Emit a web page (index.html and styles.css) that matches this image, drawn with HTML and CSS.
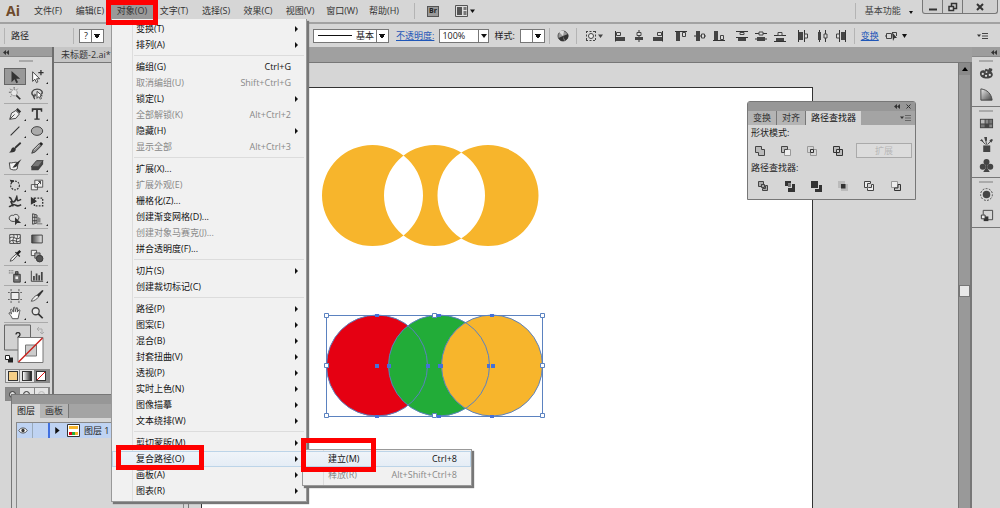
FILE: index.html
```html
<!DOCTYPE html>
<html lang="zh-CN">
<head>
<meta charset="utf-8">
<title>未标题-2.ai</title>
<link rel="stylesheet" href="styles.css">
</head>
<body>
<svg class="sprite" aria-hidden="true">
  <symbol id="al-left" viewBox="0 0 12 12"><path d="M1.5 1v10.500" stroke="#333"/><path d="M2.500 2.500h4v3h-4z" fill="#ddd" stroke="#444"/><path d="M2 7h9v4H2z" fill="#444"/></symbol>
  <symbol id="al-hc" viewBox="0 0 12 12"><path d="M6 0v12" stroke="#333"/><path d="M4 2.500h4v3H4z" fill="#ddd" stroke="#444"/><path d="M2 7h8v3H2z" fill="#444"/></symbol>
  <symbol id="al-vc" viewBox="0 0 12 12"><path d="M0 6h12" stroke="#333"/><path d="M7.500 4h3v4h-3z" fill="#ddd" stroke="#444"/><path d="M2 1h4v10H2z" fill="#444"/></symbol>
  <symbol id="al-top" viewBox="0 0 12 12"><path d="M0 1.500h12" stroke="#333"/><path d="M7.500 2.500h3v4h-3z" fill="#ddd" stroke="#444"/><path d="M1 2h4v9H1z" fill="#444"/></symbol>
  <symbol id="di-v" viewBox="0 0 12 12"><path d="M0 1.500h12M0 7.500h12" stroke="#333"/><path d="M4 2.500h4v2H4z" fill="#ddd" stroke="#444"/><path d="M2 8h8v3H2z" fill="#444"/></symbol>
  <symbol id="di-vc" viewBox="0 0 12 12"><path d="M0 3.500h12M0 9h12" stroke="#333"/><path d="M4 2h4v3H4z" fill="#ddd" stroke="#444"/><path d="M2 7h8v4H2z" fill="#444"/></symbol>
  <symbol id="di-vb" viewBox="0 0 12 12"><path d="M0 5.500h12M0 11.500h12" stroke="#333"/><path d="M4 2.500h4v3H4z" fill="#ddd" stroke="#444"/><path d="M2 8h8v3H2z" fill="#444"/></symbol>
  <symbol id="di-h" viewBox="0 0 12 12"><path d="M1.500 0v12M7.500 0v12" stroke="#333"/><path d="M7.500 4h3v4h-3z" fill="#ddd" stroke="#444"/><path d="M2 2h4v8H2z" fill="#444"/></symbol>
  <symbol id="di-hc" viewBox="0 0 12 12"><path d="M3.500 0v12M9.500 0v12" stroke="#333"/><path d="M8 4h3v4H8z" fill="#ddd" stroke="#444"/><path d="M2 2h3v8H2z" fill="#444"/></symbol>
</svg>

<header class="menubar">
  <span class="logo">Ai</span>
  <nav class="menus" aria-label="主菜单">
    <button class="top">文件(F)</button>
    <button class="top">编辑(E)</button>
    <div class="menu-wrap">
      <button class="top open">对象(O)</button>
      <div class="menu" role="menu">
        <button class="mi sub">变换(T)</button>
        <button class="mi sub">排列(A)</button>
        <hr>
        <button class="mi">编组(G)<kbd>Ctrl+G</kbd></button>
        <button class="mi" disabled>取消编组(U)<kbd>Shift+Ctrl+G</kbd></button>
        <button class="mi sub">锁定(L)</button>
        <button class="mi" disabled>全部解锁(K)<kbd>Alt+Ctrl+2</kbd></button>
        <button class="mi sub">隐藏(H)</button>
        <button class="mi" disabled>显示全部<kbd>Alt+Ctrl+3</kbd></button>
        <hr>
        <button class="mi">扩展(X)...</button>
        <button class="mi" disabled>扩展外观(E)</button>
        <button class="mi">栅格化(Z)...</button>
        <button class="mi">创建渐变网格(D)...</button>
        <button class="mi" disabled>创建对象马赛克(J)...</button>
        <button class="mi">拼合透明度(F)...</button>
        <hr>
        <button class="mi sub">切片(S)</button>
        <button class="mi">创建裁切标记(C)</button>
        <hr>
        <button class="mi sub">路径(P)</button>
        <button class="mi sub">图案(E)</button>
        <button class="mi sub">混合(B)</button>
        <button class="mi sub">封套扭曲(V)</button>
        <button class="mi sub">透视(P)</button>
        <button class="mi sub">实时上色(N)</button>
        <button class="mi sub">图像描摹</button>
        <button class="mi sub">文本绕排(W)</button>
        <hr>
        <button class="mi sub">剪切蒙版(M)</button>
        <div class="sub-wrap">
          <button class="mi sub hot">复合路径(O)</button>
          <div class="menu submenu" role="menu">
            <button class="mi hot">建立(M)<kbd>Ctrl+8</kbd></button>
            <button class="mi" disabled>释放(R)<kbd>Alt+Shift+Ctrl+8</kbd></button>
            <span class="mark mark-make"></span>
          </div>
          <span class="mark mark-compound"></span>
        </div>
        <button class="mi sub">画板(A)</button>
        <button class="mi sub">图表(R)</button>
      </div>
      <span class="mark mark-object"></span>
    </div>
    <button class="top">文字(T)</button>
    <button class="top">选择(S)</button>
    <button class="top">效果(C)</button>
    <button class="top">视图(V)</button>
    <button class="top">窗口(W)</button>
    <button class="top">帮助(H)</button>
  </nav>
  <span class="vsep"></span>
  <button class="bridge" aria-label="Bridge">Br</button>
  <button class="arrange" aria-label="排列文档">
    <svg width="22" height="12" viewBox="0 0 22 12"><path d="M.5.500h12v11H.5z" fill="#ddd" stroke="#555"/><path d="M2 2h5v8H2z" fill="#555"/><path d="M8.500 2h3v3h-3zM8.500 6h3v4h-3z" fill="#777"/><path d="M15 4.500h5l-2.500 3.500z" fill="#111"/></svg>
  </button>
  <span class="grow"></span>
  <span class="vsep tall"></span>
  <button class="workspace-pick">基本功能 <i class="caret small"></i></button>
  <div class="winbtns">
    <button aria-label="最小化"><svg width="10" height="10" viewBox="0 0 10 10"><path d="M1 7.500h8" stroke="#333" stroke-width="2"/></svg></button>
    <button aria-label="还原"><svg width="10" height="10" viewBox="0 0 10 10"><path d="M3.500 1.500h5v5h-5z" fill="none" stroke="#333" stroke-width="1.500"/><path d="M1 4.500h4.500v4H1z" fill="#ddd" stroke="#333" stroke-width="1.500"/></svg></button>
    <button class="close" aria-label="关闭"><svg width="10" height="10" viewBox="0 0 10 10"><path d="M2 2l6 6M8 2l-6 6" stroke="#333" stroke-width="2"/></svg></button>
  </div>
</header>

<section class="controls" aria-label="控制">
  <span class="vsep"></span>
  <span class="kind">路径</span>
  <span class="vsep"></span>
  <select class="box fillbox" aria-label="填色"><option>?</option></select>
  <div class="stroke-set">
    <label class="brush"><span class="line"></span><select class="box" aria-label="画笔定义"><option>基本</option></select></label>
    <a href="#opacity">不透明度:</a>
    <span class="combo"><input id="opacity" aria-label="不透明度" value="100%"><button aria-label="选择不透明度"><i class="caret"></i></button></span>
    <label for="gstyle">样式:</label>
    <select id="gstyle" class="box gstyle"><option></option></select>
  </div>
  <span class="vsep"></span>
  <button class="ic" aria-label="重新着色"><svg width="12" height="12" viewBox="0 0 12 12"><circle cx="6" cy="6" r="5" fill="#999" stroke="#555"/><path d="M6 6L2 2a5 5 0 0 1 5-1z" fill="#ddd"/><path d="M6 6L11 4a5 5 0 0 1-3 6.500zM6 6l-4.500 2A5 5 0 0 0 7 11z" fill="#333"/></svg></button>
  <span class="vsep"></span>
  <button class="ic wide" aria-label="对齐"><svg width="18" height="12" viewBox="0 0 18 12"><path d="M1 1.500h10M1 10.500h10M1.500 1v10M10.500 1v10" stroke="#444" stroke-dasharray="2 1.500"/><circle cx="6" cy="6" r="2.500" fill="#eee" stroke="#444"/><path d="M13 4.500h5L15.500 8z" fill="#444"/></svg></button>
  <div class="icset">
    <button class="ic" aria-label="左对齐"><svg><use href="#al-left"/></svg></button>
    <button class="ic" aria-label="水平居中"><svg><use href="#al-hc"/></svg></button>
    <button class="ic" aria-label="右对齐"><svg class="flipx"><use href="#al-left"/></svg></button>
  </div>
  <div class="icset">
    <button class="ic" aria-label="顶对齐"><svg><use href="#al-top"/></svg></button>
    <button class="ic" aria-label="垂直居中"><svg><use href="#al-vc"/></svg></button>
    <button class="ic" aria-label="底对齐"><svg class="flipy"><use href="#al-top"/></svg></button>
  </div>
  <div class="icset">
    <button class="ic" aria-label="按顶分布"><svg><use href="#di-v"/></svg></button>
    <button class="ic" aria-label="垂直分布"><svg><use href="#di-vc"/></svg></button>
    <button class="ic" aria-label="按底分布"><svg><use href="#di-vb"/></svg></button>
  </div>
  <div class="icset">
    <button class="ic" aria-label="按左分布"><svg><use href="#di-h"/></svg></button>
    <button class="ic" aria-label="水平分布"><svg><use href="#di-hc"/></svg></button>
    <button class="ic" aria-label="按右分布"><svg class="flipx"><use href="#di-h"/></svg></button>
  </div>
  <span class="vsep"></span>
  <a href="#transform">变换</a>
  <button class="ic iso" aria-label="隔离"><svg width="24" height="12" viewBox="0 0 24 12"><path d="M1.500 3.500h5v5h-5zM0 6h2" fill="none" stroke="#444"/><path d="M7 2.500h4.500V6" fill="none" stroke="#444"/><path d="M7 2l5 6H9.500L8 11z" fill="#333"/><path d="M17 4h5l-2.500 4z" fill="#111"/></svg></button>
  <span class="grow"></span>
  <button class="ic flymenu" aria-label="面板菜单"><svg width="12" height="10" viewBox="0 0 12 10"><path d="M0 3.500h4L2 6z" fill="#333"/><path d="M5 2.500h6M5 5h6M5 7.500h6" stroke="#444"/></svg></button>
</section>

<main class="stage">
  <aside class="tools" aria-label="工具">
    <div class="cap"><svg width="6" height="5" viewBox="0 0 6 5"><path d="M3 0v5L0 2.500zM6 0v5L3 2.500z" fill="#333"/></svg></div>
    <span class="grip"></span>
    <div class="tgroup">
      <button class="on" aria-label="选择"><svg viewBox="0 0 16 16"><path d="M4 1v13l3.500-3.500 2 4.500 2-1-2-4H14z" fill="#333"/></svg></button>
      <button class="more" aria-label="直接选择"><svg viewBox="0 0 16 16"><path d="M3 2v11l2.500-2.500 2 4 1.500-1L7.500 10H11z" fill="#fff" stroke="#333"/><path d="M12.500 0v6M9.500 3h6" stroke="#333" stroke-width="1.500"/></svg></button>
      <button aria-label="魔棒"><svg viewBox="0 0 16 16"><circle cx="7" cy="6.500" r="3.500" fill="#e8e8e8" stroke="#555" stroke-dasharray="1 1"/><path d="M7 0v2M1 6h2M2.500 2l1.500 1.500M11 2l-1 1M3 11l1-1" stroke="#555"/><path d="M9.500 9.500l4.500 4.500" stroke="#333" stroke-width="2"/></svg></button>
      <button aria-label="套索"><svg viewBox="0 0 16 16"><path d="M4 10C0 7 3 2.500 8 2.500s7.500 3 5 6M4 10c-1 2 2 2 1 4M4 10c2 1 3-1 1-2" fill="none" stroke="#444" stroke-width="1.500"/><path d="M8 5v8l2-2 2 3 1-1-1.500-3H14z" fill="#fff" stroke="#333"/></svg></button>
    </div>
    <div class="tgroup">
      <button class="more" aria-label="钢笔"><svg viewBox="0 0 16 16"><path d="M2 14l2-7 5-3 4 4-4 5zM2 14l5.500-5.500" fill="#eee" stroke="#333"/><path d="M9 3l2-2 4 4-2 2z" fill="#333"/></svg></button>
      <button class="more" aria-label="文字"><svg viewBox="0 0 16 16"><path d="M2 1.500h12v4h-1.500L12 3.500H9V13h2v1.500H5V13h2V3.500H4l-.5 2H2z" fill="#333"/></svg></button>
      <button class="more" aria-label="直线段"><svg viewBox="0 0 16 16"><path d="M3 13L13 3" stroke="#333" stroke-width="1.300"/></svg></button>
      <button class="more" aria-label="椭圆"><svg viewBox="0 0 16 16"><ellipse cx="8" cy="8" rx="6.500" ry="5" fill="#aaa" stroke="#333"/></svg></button>
      <button aria-label="画笔"><svg viewBox="0 0 16 16"><path d="M14.500 2L8 8" stroke="#333" stroke-width="2"/><path d="M9 8.500c0 4-3 5-8 4.500 3-1 2-5 5-6z" fill="#333"/></svg></button>
      <button class="more" aria-label="铅笔"><svg viewBox="0 0 16 16"><path d="M2 14l1.500-4 7-7 2.500 2.500-7 7z" fill="#888" stroke="#333"/><path d="M10.500 3l2-2 2.500 2.500-2 2z" fill="#222"/><path d="M5 10l6-6" stroke="#ddd"/></svg></button>
      <button aria-label="斑点画笔"><svg viewBox="0 0 16 16"><path d="M1.500 5.500c3 1 7-2 10 0l-1 7c-2 2-6 1-8 0z" fill="#f4f4f4" stroke="#333"/><path d="M15.500 1L9 6l-4 5c3 0 5-1 6-3z" fill="#333"/></svg></button>
      <button class="more" aria-label="橡皮擦"><svg viewBox="0 0 16 16"><path d="M1.500 10l6-7h7.500L9.500 10z" fill="#777" stroke="#333"/><path d="M1.500 10h8v4h-8zM9.500 10L15 3v4l-5.500 7z" fill="#444"/></svg></button>
    </div>
    <div class="tgroup">
      <button class="more" aria-label="旋转"><svg viewBox="0 0 16 16"><circle cx="8" cy="8.500" r="5" fill="none" stroke="#333" stroke-width="1.300" stroke-dasharray="2 1.300"/><path d="M2 2l5 .5-3 4z" fill="#333"/></svg></button>
      <button class="more" aria-label="比例缩放"><svg viewBox="0 0 16 16"><path d="M5.500 2.500h9v8h-9zM1.500 7.500h7v6h-7z" fill="#eee" stroke="#444"/><path d="M8 8l4-4M9.500 4H12v3" fill="none" stroke="#333"/></svg></button>
      <button class="more" aria-label="宽度"><svg viewBox="0 0 16 16"><path d="M1 3c4-1 2 5 5 5s3-4 4-6c1 4-1 6 5 3M1 13c3 1 3-3 6-2s4 3 8 0M3 7l3 6" fill="none" stroke="#333" stroke-width="1.800"/></svg></button>
      <button aria-label="自由变换"><svg viewBox="0 0 16 16"><path d="M5 3.500h9.500v9H5z" fill="none" stroke="#333" stroke-width="1.500" stroke-dasharray="2 1.500"/><path d="M1 2v9l7-4z" fill="#333"/></svg></button>
      <button class="more" aria-label="形状生成器"><svg viewBox="0 0 16 16"><path d="M2 9c-2-4 2-6 4-5 3-3 8 0 6 4-1 3-8 4-10 1z" fill="#ddd" stroke="#333"/><path d="M8 6v9l2.500-2.500H15z" fill="#333"/></svg></button>
      <button class="more" aria-label="透视网格"><svg viewBox="0 0 16 16"><path d="M3 2l5 1.500v9L3 14zM3 6h5M3 10h5M5.500 3v10" fill="#ddd" stroke="#333"/><path d="M8 5l4 2v5H8z" fill="#888"/><path d="M8 13.500h6" stroke="#666"/></svg></button>
    </div>
    <div class="tgroup">
      <button aria-label="网格"><svg viewBox="0 0 16 16"><path d="M2 3h12v10H2z" fill="#eee" stroke="#333"/><path d="M2 7c4-4 8 4 12-1M2 11c4-4 8 2 12-1M6 3c3 3-3 6 1 10M10 3c3 3-3 6 1 10" fill="none" stroke="#333"/></svg></button>
      <button aria-label="渐变"><svg viewBox="0 0 16 16"><defs><linearGradient id="g1"><stop stop-color="#444"/><stop offset="1" stop-color="#eee"/></linearGradient></defs><path d="M2 3.500h12v9H2z" fill="url(#g1)" stroke="#333"/></svg></button>
      <button class="more" aria-label="吸管"><svg viewBox="0 0 16 16"><path d="M2.500 14l1-3 5.500-5 1.500 1.500-5 5.500z" fill="#eee" stroke="#444"/><path d="M8 4l5 5 1-1-2-2 3-3-2-2-3 3-1-1z" fill="#222"/></svg></button>
      <button aria-label="混合"><svg viewBox="0 0 16 16"><path d="M1.500 1.500h6v6h-6z" fill="#eee" stroke="#444"/><path d="M5.500 4.500h6v6h-6z" fill="#aaa" stroke="#444"/><circle cx="11" cy="11" r="3.800" fill="#555" stroke="#333"/></svg></button>
    </div>
    <div class="tgroup">
      <button class="more" aria-label="符号喷枪"><svg viewBox="0 0 16 16"><path d="M6.500 6H14v9H6.500zM8.500 3h3v3h-3z" fill="#777" stroke="#333"/><path d="M8.500 8.500h3v3h-3z" fill="#eee"/><path d="M1 2h6M1 4.500h6" stroke="#444" stroke-dasharray="1 1"/></svg></button>
      <button class="more" aria-label="柱形图"><svg viewBox="0 0 16 16"><path d="M1.500 2v12H15" fill="none" stroke="#333"/><path d="M3.500 8h2v5h-2zM6.500 5h2v8h-2zM9.500 7h2v6h-2zM12.500 3.500h2V13h-2z" fill="#444"/></svg></button>
    </div>
    <div class="tgroup">
      <button aria-label="画板"><svg viewBox="0 0 16 16"><path d="M3.500 4h9v8h-9z" fill="#eee" stroke="#333"/><path d="M3.500 0v2.500M12.500 0v2.500M3.500 13.500V16M12.500 13.500V16M0 4h2M0 12h2M14 4h2M14 12h2" stroke="#555"/></svg></button>
      <button class="more" aria-label="切片"><svg viewBox="0 0 16 16"><path d="M1.500 14c1-3 4-6 6.500-7l2 2c-2 2-5 5-8.500 5z" fill="#eee" stroke="#444"/><path d="M8 6.500l6-5.500 1.500 1L10 9z" fill="#333"/></svg></button>
      <button class="more" aria-label="抓手"><svg viewBox="0 0 16 16"><path d="M5 14.500C4 11.500 2 10 1 8c1-1 2 0 3 1L3 4c1-1 2 0 3 3l.5-5.500c1-1 1.500 0 1.800 5l1.500-4.500c1-.5 1.700 0 .7 5l2-2.500c1-.5 1.500 0 .5 3l-1.500 7z" fill="#fff" stroke="#444"/></svg></button>
      <button aria-label="缩放"><svg viewBox="0 0 16 16"><circle cx="6.500" cy="6" r="4" fill="#e6e6e6" stroke="#444" stroke-width="1.500"/><path d="M9.500 9l5 5" stroke="#333" stroke-width="2"/></svg></button>
    </div>
    <svg class="fillstroke" viewBox="0 0 46 42" role="img" aria-label="填色和描边">
      <path d="M.5 1h26v25H.5z" fill="#d2d2d2" stroke="#666"/>
      <path d="M12 10.500c0-2.500 4-2.500 4 0 0 2-2 1.500-2 3.500" fill="none" stroke="#222" stroke-width="1.200"/>
      <path d="M14 13.500h25v25H14z" fill="#fff" stroke="#777"/>
      <path d="M21.500 21h11v11h-11z" fill="#ccc" stroke="#777"/>
      <path d="M14.500 38L38.500 14" stroke="#c8201c" stroke-width="1.500"/>
      <path d="M33 5h5v4M35 3l-2 2 2 2M36 8l2 2 2-2" fill="none" stroke="#aaa"/>
      <path d="M4 33.500h5v5H4z" fill="#222"/><path d="M1.500 31.500h4v4h-4z" fill="#fff" stroke="#222"/>
    </svg>
    <div class="paintmode">
      <button aria-label="颜色"><i class="p-color"></i></button><button aria-label="渐变色"><i class="p-grad"></i></button><button class="on" aria-label="无"><i class="p-none"></i></button>
    </div>
    <div class="paintmode modes">
      <button class="on" aria-label="正常绘图"><i class="dot"></i></button><button aria-label="背面绘图"><i class="dot"></i></button><button aria-label="内部绘图"><i class="dot dim"></i></button>
    </div>
  </aside>

  <section class="doc">
    <div class="tabs"><span class="tab">未标题-2.ai*</span></div>
    <div class="view">
      <div class="canvas">
        <div class="artboard">
          <svg class="art" width="230" height="280" viewBox="320 140 230 280" role="img" aria-label="圆形">
            <path fill="#f7b52c" fill-rule="evenodd" d="M322 195.500a50.500 50.500 0 1 0 101 0a50.500 50.500 0 1 0-101 0zM384 195.500a50.500 50.500 0 1 0 101 0a50.500 50.500 0 1 0-101 0zM437.500 195.500a50.500 50.500 0 1 0 101 0a50.500 50.500 0 1 0-101 0z"/>
            <circle cx="377" cy="365.500" r="50.500" fill="#e50012"/>
            <circle cx="439" cy="365.500" r="50.500" fill="#22ac38"/>
            <circle cx="492" cy="365.500" r="50.500" fill="#f7b52c"/>
            <g fill="none" stroke="#5b82c0">
              <circle cx="377" cy="365.500" r="50.500"/><circle cx="439" cy="365.500" r="50.500"/><circle cx="492" cy="365.500" r="50.500"/>
              <path d="M326.500 315.500h216v101h-216z"/>
            </g>
            <path fill="#4571d8" d="M375 314h4v3h-4zM437 314h4v3h-4zM490 314h4v3h-4zM375 415h4v3h-4zM437 415h4v3h-4zM490 415h4v3h-4zM375 364h4v4h-4zM387 364h4v4h-4zM426 364h4v4h-4zM438 364h5v4h-5zM487 364h3v4h-3zM491 364h4v4h-4z"/>
            <path fill="#fff" stroke="#5b82c0" d="M324.500 313.500h4v4h-4zM432.500 313.500h4v4h-4zM540.500 313.500h4v4h-4zM324.500 363.500h4v4h-4zM540.500 363.500h4v4h-4zM324.500 413.500h4v4h-4zM432.500 413.500h4v4h-4zM540.500 413.500h4v4h-4z"/>
          </svg>
        </div>
      </div>
      <div class="scroll"><span class="up"></span><span class="thumb"></span></div>
    </div>
  </section>

  <aside class="dock" aria-label="面板">
    <div class="cap"><svg width="6" height="5" viewBox="0 0 6 5"><path d="M3 0v5L0 2.500zM6 0v5L3 2.500z" fill="#333"/></svg></div>
    <div class="dgroup"><span class="grip"></span>
      <button aria-label="颜色面板"><svg viewBox="0 0 16 16"><path d="M1 8c0-3 3-4 5-3l1-2 3 1 1-2 3 1c1 2-1 3-1 3 3 2 2 6-2 7-4 1-10 0-10-5z" fill="#444"/><g fill="#ddd"><circle cx="4" cy="8.500" r="1.200"/><circle cx="7.500" cy="10.500" r="1.200"/><circle cx="11.500" cy="9.500" r="1.200"/><circle cx="8" cy="6.500" r="1"/></g></svg></button>
      <button aria-label="颜色参考"><svg viewBox="0 0 16 16"><defs><linearGradient id="g2" x2="1" y2="1"><stop stop-color="#eee"/><stop offset="1" stop-color="#444"/></linearGradient></defs><path d="M2 2c7 1 11 5 12 12H2z" fill="url(#g2)" stroke="#444"/></svg></button>
    </div>
    <div class="dgroup"><span class="grip"></span>
      <button aria-label="色板"><svg viewBox="0 0 16 16"><path d="M1 3h14v10H1z" fill="#444"/><path d="M2 4h4v4H2z" fill="#bbb"/><path d="M7 4h3v4H7zM11 9h3v3h-3z" fill="#888"/><path d="M2 9h4v3H2zM11 4h3v4h-3z" fill="#777"/></svg></button>
      <button aria-label="画笔面板"><svg viewBox="0 0 16 16"><path d="M4.500 9H12v7H4.500z" fill="#444"/><path d="M7 8L3 4M8 8L7 2M9 8l4-4" stroke="#444"/><path d="M1 4l2-2 2 3zM5.500 0h3v4h-2zM11 4l2-2 2 1-2 3z" fill="#444"/></svg></button>
      <button aria-label="符号"><svg viewBox="0 0 16 16"><circle cx="8" cy="4.200" r="3.200" fill="#444"/><circle cx="4" cy="9.200" r="3.200" fill="#444"/><circle cx="12" cy="9.200" r="3.200" fill="#444"/><path d="M7 6h2v5l2.500 4h-7L7 11z" fill="#444"/></svg></button>
    </div>
    <div class="dgroup"><span class="grip"></span>
      <button aria-label="外观"><svg viewBox="0 0 16 16"><circle cx="8" cy="8" r="4" fill="#444"/><circle cx="8" cy="8" r="6.300" fill="none" stroke="#444" stroke-dasharray="2 1.500"/></svg></button>
      <button aria-label="图形样式"><svg viewBox="0 0 16 16"><path d="M4.500 2.500h10v10H8M4.500 2.500V7" fill="none" stroke="#444"/><path d="M5 9h5v5H5z" fill="#333"/><path d="M2.500 7.500h4v4h-4z" fill="#eee" stroke="#333"/></svg></button>
    </div>
  </aside>
</main>

<section class="panel pathfinder" aria-label="路径查找器">
  <div class="phead"><svg width="6" height="5" viewBox="0 0 6 5"><path d="M3 0v5L0 2.500zM6 0v5L3 2.500z" fill="#333"/></svg><svg width="5" height="5" viewBox="0 0 5 5"><path d="M.5.500l4 4M4.500.500l-4 4" stroke="#333"/></svg></div>
  <div class="ptabs"><button>变换</button><button>对齐</button><button class="on">路径查找器</button><span class="grow"></span><svg class="fly" width="12" height="10" viewBox="0 0 12 10"><path d="M0 3.500h4L2 6z" fill="#333"/><path d="M5 2.500h6M5 5h6M5 7.500h6" stroke="#666"/></svg></div>
  <div class="pbody">
    <p>形状模式:</p>
    <div class="prow modesrow">
      <button aria-label="联集"><svg viewBox="0 0 12 12"><path d="M1.500 1.500h6v3h3v6h-6v-3h-3z" fill="#bbb" stroke="#444"/></svg></button>
      <button aria-label="减去顶层"><svg viewBox="0 0 12 12"><path d="M4.500 4.500h6v6h-6z" fill="#eee" stroke="#999"/><path d="M1.500 1.500h6v3h-3v3h-3z" fill="#bbb" stroke="#444"/></svg></button>
      <button aria-label="交集"><svg viewBox="0 0 12 12"><path d="M1.500 1.500h6v6h-6zM4.500 4.500h6v6h-6z" fill="none" stroke="#999"/><path d="M4.500 4.500h3v3h-3z" fill="#ddd" stroke="#333"/></svg></button>
      <button aria-label="差集"><svg viewBox="0 0 12 12"><path d="M1.500 1.500h6v6h-6zM4.500 4.500h6v6h-6z" fill="#bbb" fill-rule="evenodd" stroke="#333"/></svg></button>
      <button class="expand" disabled>扩展</button>
    </div>
    <p>路径查找器:</p>
    <div class="prow finders">
      <button aria-label="分割"><svg viewBox="0 0 12 12"><path d="M1.500 1.500h5v3h-2v2h-3zM4.500 4.500h3v3h-3zM8.500 5.500h2v5h-5v-2h3z" fill="#aaa" stroke="#444"/></svg></button>
      <button aria-label="修边"><svg viewBox="0 0 12 12"><path d="M1 1h6v2.500H4V6H1zM8 4h3v8H4V8h4z" fill="#333"/><path d="M4 4h3v3H4z" fill="#777"/></svg></button>
      <button aria-label="合并"><svg viewBox="0 0 12 12"><path d="M1 1h7v7H1zM9 5h3v7H5V9h4z" fill="#333"/></svg></button>
      <button aria-label="裁剪"><svg viewBox="0 0 12 12"><path d="M1 1h7v7H1zM4 4h7v7H4z" fill="#bbb"/><path d="M4 4h4.500v4.500H4z" fill="#333"/></svg></button>
      <button aria-label="轮廓"><svg viewBox="0 0 12 12"><path d="M1.500 1.500h6v2h-3v4h-3zM4.500 8.500v2h6v-6h-2v3h-3z" fill="#eee" stroke="#444"/></svg></button>
      <button aria-label="减去后方"><svg viewBox="0 0 12 12"><path d="M1.500 1.500h6v6h-6z" fill="#eee" stroke="#999"/><path d="M8 4.500h2.500v6h-6V8H8z" fill="#ccc" stroke="#333"/></svg></button>
    </div>
  </div>
</section>

<section class="panel layers" aria-label="图层">
  <div class="phead"></div>
  <div class="ptabs"><button class="on">图层</button><button>画板</button></div>
  <div class="list">
    <div class="layer">
      <svg class="eye" viewBox="0 0 12 10"><path d="M1 5c2-4 8-4 10 0-2 4-8 4-10 0z" fill="#fff" stroke="#333"/><circle cx="6" cy="5" r="2" fill="#333"/></svg>
      <span class="lock"></span><span class="bar"></span>
      <svg class="tri" viewBox="0 0 6 8"><path d="M1 0l5 4-5 4z" fill="#111"/></svg>
      <svg class="thumbnail" viewBox="0 0 13 13"><path d="M.5.500h12v12H.5z" fill="#fff" stroke="#333"/><path d="M2 2h9v3H2z" fill="#f7b52c"/><path d="M2 8h3v3H2z" fill="#e50012"/><path d="M5 8h3v3H5z" fill="#22ac38"/><path d="M8 8h3v3H8z" fill="#f7b52c"/></svg>
      <span>图层 1</span>
    </div>
  </div>
</section>
</body>
</html>
```

FILE: styles.css
```css
* { box-sizing: border-box; }

html, body { height: 100%; }

body {
  margin: 0;
  display: flex;
  flex-direction: column;
  position: relative;
  overflow: hidden;
  background: #d6d6d6;
  color: #222;
  font: 9px/12px "Open Sans", "Noto Sans CJK SC", sans-serif;
}

button, select, input {
  margin: 0;
  padding: 0;
  border: 0;
  border-radius: 0;
  background: none;
  color: inherit;
  font: inherit;
}

svg { display: block; flex: none; }
a { color: #1f57b8; }
p { margin: 0; }
.sprite { position: absolute; width: 0; height: 0; }
.grow { flex: 1; }
.vsep { width: 1px; height: 16px; background: #b4b4b4; flex: none; }
.flipx { transform: scaleX(-1); }
.flipy { transform: scaleY(-1); }

.caret {
  display: inline-block;
  border: 3px solid transparent;
  border-top: 4px solid #111;
  border-bottom: 0;
}
.caret.small { border-width: 3px 2px 0; margin-left: 6px; }

/* Menu bar */
.menubar {
  flex: none;
  display: flex;
  align-items: center;
  height: 24px;
  border-bottom: 2px solid #a2a2a2;
  background: #d6d6d6;
  white-space: nowrap;
}
.logo { width: 27px; padding-left: 6px; font: bold 14px/20px "Open Sans", sans-serif; color: #6e4a2c; }
.menus { display: flex; align-self: stretch; }
.top { height: 22px; width: 42px; color: #333; }
.top.open { background: #999; }
.menubar > .vsep { margin: 0 12px 0 9px; }
.bridge { width: 12px; height: 11px; border: 1px solid #555; background: #999; font-weight: bold; font-size: 7px; line-height: 8px; }
.arrange { margin-left: 16px; }
.menubar > .tall { margin: 0 9px; }
.workspace-pick { margin-right: 9px; color: #444; }

.winbtns {
  display: flex;
  align-self: flex-start;
  height: 14px;
  margin-right: 2px;
  border: 1px solid #777;
  border-top: 0;
  border-radius: 0 0 3px 3px;
  background: #cfcfcf;
}
.winbtns button { width: 20px; display: flex; align-items: center; justify-content: center; border-right: 1px solid #777; }
.winbtns .close { width: 34px; border: 0; }

/* Drop-down menu */
.menu-wrap, .sub-wrap { position: relative; }
.menu {
  position: absolute;
  z-index: 10;
  left: 0;
  top: 19px;
  width: 196px;
  padding: 2px 0;
  border: 1px solid #999;
  border-top: 0;
  background: linear-gradient(90deg, #f1f1f1 20px, #ddd 20px, #ddd 21px, #f1f1f1 21px);
  box-shadow: 2px 2px 1px #777;
  color: #111;
}
.mi {
  position: relative;
  display: flex;
  align-items: center;
  justify-content: space-between;
  width: 100%;
  height: 16px;
  padding: 0 15px 0 24px;
  text-align: left;
}
.mi:disabled { color: #888; }
.mi kbd { font: inherit; }
.mi.sub { padding-right: 8px; }
.mi.sub::after {
  content: "";
  border: 3px solid transparent;
  border-left-color: #111;
  border-right: 0;
}
.mi.hot { background: linear-gradient(#f0f4f9, #e4ecf5); box-shadow: inset 0 0 0 1px #bcd4e8; }
.menu hr { height: 1px; margin: 2px 2px 3px 22px; border: 0; background: #dcdcdc; }
.submenu { left: 190px; top: -2px; width: 170px; border-top: 1px solid #999; padding: 1px 0 2px; }
.submenu .mi { padding-left: 25px; padding-right: 14px; }

.mark { position: absolute; z-index: 20; border: 5px solid #f00; pointer-events: none; }
.mark-object { inset: 0 -5px -3px; }
.mark-compound { left: 4px; top: -6px; width: 88px; height: 25px; }
.mark-make { left: -2px; top: -12px; width: 75px; height: 34px; }

/* Control bar */
.controls {
  flex: none;
  display: flex;
  align-items: center;
  height: 23px;
  padding-left: 4px;
  background: #d6d6d6;
  white-space: nowrap;
}
.kind { width: 68px; padding-left: 6px; }
.box, .combo { height: 14px; border: 1px solid #777; background: #fff; }
.box {
  appearance: none;
  background:
    linear-gradient(#777, #777) right 11px top / 1px 100% no-repeat,
    linear-gradient(#111, #111) right 3px top 4px / 6px 1px no-repeat,
    linear-gradient(#111, #111) right 4px top 5px / 4px 2px no-repeat,
    linear-gradient(#111, #111) right 5px top 7px / 2px 1px no-repeat,
    #fff;
}
.fillbox { width: 25px; margin-left: 5px; padding-left: 4px; }
.stroke-set { display: flex; align-items: center; gap: 5px; margin: 0 4px 0 209px; }
.brush { position: relative; display: flex; width: 76px; margin-right: 2px; }
.brush .box { width: 100%; padding-left: 42px; }
.brush .line { position: absolute; left: 5px; top: 6px; width: 34px; height: 1px; background: #111; }
.combo { display: flex; width: 50px; }
.combo input { width: 38px; padding-left: 2px; }
.combo button { flex: 1; display: flex; align-items: center; justify-content: center; border-left: 1px solid #777; }
.gstyle { width: 25px; }
.ic { display: flex; align-items: center; justify-content: center; width: 14px; height: 14px; margin: 0 6px; }
.ic.wide { width: 18px; margin: 0 6px 0 8px; }
.icset { display: flex; gap: 5px; margin: 0 5px 0 4px; }
.icset .ic { margin: 0; }
.icset svg { width: 12px; height: 12px; }
.icset + .vsep { margin: 0 6px 0 1px; }
.ic.iso { width: 24px; }
.flymenu { margin-right: 10px; }

/* Work area */
.stage { flex: 1; min-height: 0; display: flex; align-items: stretch; }
.cap { height: 10px; padding: 3px; background: #9d9d9d; border-bottom: 1px solid #888; }
.grip { display: block; width: 14px; height: 2px; margin: 3px auto 6px; background: #aaa; }

.tools { flex: none; width: 54px; border-right: 2px solid #6e6e6e; overflow: hidden; }
.tgroup {
  display: grid;
  grid-template-columns: 22px 22px;
  grid-auto-rows: 17px;
  margin: 0 4px 1px;
  padding-bottom: 1px;
  border-bottom: 1px solid #aaa;
}
.tgroup button { position: relative; display: flex; align-items: center; justify-content: center; }
.tgroup svg { width: 14px; height: 14px; }
.tgroup .on { background: #999; outline: 1px solid #666; outline-offset: -1px; }
.tgroup .more::after {
  content: "";
  position: absolute;
  right: 0;
  bottom: 1px;
  border: 1px solid #222;
  border-top-color: transparent;
  border-left-color: transparent;
}
.fillstroke { width: 46px; height: 42px; margin: 0 0 3px 4px; }
.paintmode { display: flex; width: 45px; height: 14px; margin: 0 0 4px 5px; border: 1px solid #888; }
.paintmode button { flex: 1; display: flex; align-items: center; justify-content: center; border-right: 1px solid #888; background: #e4e4e4; }
.paintmode .on { background: #8c8c8c; }
.paintmode i { width: 10px; height: 10px; border: 1px solid #333; }
.p-color { background: #f6cf87; }
.p-grad { background: linear-gradient(90deg, #fff, #222); }
.p-none { background: linear-gradient(135deg, #fff 44%, #d11 44%, #d11 56%, #fff 56%); }
.paintmode .dot { width: 7px; height: 7px; border-radius: 50%; background: #ddd; }
.paintmode .dim { border-color: #bbb; }

.doc { flex: 1; min-width: 0; display: flex; flex-direction: column; }
.tabs { height: 16px; background: #a0a0a0; border-bottom: 1px solid #777; display: flex; }
.tab { width: 76px; padding: 2px 0 0 7px; background: #c6c6c6; color: #333; }
.view { flex: 1; min-height: 0; display: flex; }
.canvas { flex: 1; display: flex; padding: 24px 145px 0 147px; background: #d6d6d6; }
.artboard { position: relative; flex: 1; background: #fff; border: 1px solid #333; border-bottom: 0; }
.art { position: absolute; left: 118px; top: 52px; }
.scroll { width: 14px; background: #999; border: solid #777; border-width: 0 2px 0 1px; }
.up { display: block; height: 12px; background: #8a8a8a; border: 3px solid #8a8a8a; border-top-width: 4px; }
.up::before { content: ""; display: block; margin: 0 auto; width: 0; border: 3px solid transparent; border-top: 0; border-bottom: 4px solid #000; }
.thumb { display: block; height: 12px; margin-top: 210px; background: #e8e8e8; border: 1px solid #777; }

.dock { flex: none; width: 28px; }
.dock .cap { display: flex; justify-content: flex-end; }
.dgroup { padding-bottom: 1px; border-bottom: 1px solid #777; }
.dgroup .grip { margin-bottom: 1px; }
.dgroup button { display: flex; align-items: center; justify-content: center; width: 100%; height: 21px; }
.dgroup svg { width: 15px; height: 15px; }

/* Floating panels */
.panel { position: absolute; z-index: 5; border: 1px solid #777; background: #d6d6d6; }
.phead { display: flex; justify-content: flex-end; align-items: center; gap: 6px; height: 9px; padding-right: 4px; background: #979797; }
.ptabs { display: flex; align-items: stretch; height: 14px; background: #a4a4a4; }
.ptabs button { padding: 0 5px; border-right: 1px solid #777; color: #333; background: #b4b4b4; }
.ptabs .on { background: #d6d6d6; border-right: 0; color: #111; }
.ptabs .fly { align-self: center; margin-right: 3px; }
.pathfinder { right: 84px; top: 101px; width: 169px; border-radius: 3px 3px 0 0; }
.pathfinder .ptabs button { padding: 0 5px; }
.pbody { padding: 2px 3px; }
.prow { display: flex; align-items: center; height: 23px; }
.prow svg { width: 12px; height: 12px; }
.modesrow { gap: 14px; padding-left: 3px; }
.prow .expand { flex: 1; height: 15px; margin-left: -2px; border: 1px solid #aaa; background: #dcdcdc; color: #b8b8b8; }
.finders { justify-content: space-between; padding: 0 10px 0 6px; }

.layers { display: flex; flex-direction: column; left: 11px; top: 394px; bottom: 0; width: 178px; border-bottom: 0; }
.layers .phead, .layers .ptabs { flex: none; }
.list { flex: 1; min-height: 0; margin: 4px 4px 0; border: 1px solid #888; border-bottom: 0; }
.layer { display: flex; align-items: center; height: 15px; background: #bfd3f2; color: #222; }
.eye { width: 10px; height: 9px; margin: 0 4px 0 1px; }
.lock { align-self: stretch; width: 16px; border-left: 1px solid #9ab; }
.bar { align-self: stretch; width: 2px; background: #3f6fe0; }
.tri { width: 6px; height: 7px; margin: 0 7px 0 4px; }
.thumbnail { width: 13px; height: 13px; margin-right: 4px; }
```
